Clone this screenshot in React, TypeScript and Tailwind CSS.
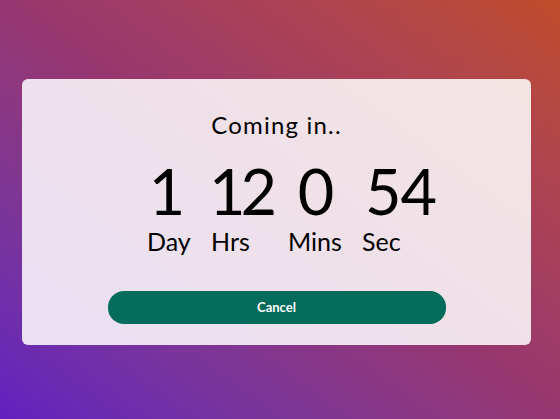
import React from "react";

const units = [
  { value: "1", label: "Day", numCls: "ml-0", labelW: "w-[64px]" },
  { value: "12", label: "Hrs", numCls: "ml-[12px] tracking-[-5px]", labelW: "w-[77px]" },
  { value: "0", label: "Mins", numCls: "ml-[17px]", labelW: "w-[74px]" },
  { value: "54", label: "Sec", numCls: "ml-[19px] tracking-[-1px]", labelW: "w-[60px]" },
];

const App = () => {
  return (
    <div
      className="w-[560px] h-[419px] bg-linear-to-tr from-[#621fc0] via-[#973670] to-[#c04c28] pt-[79px] px-[22px]"
      style={{ fontFamily: "Lato, 'Noto Sans', sans-serif" }}
    >
      {/* Card */}
      <div className="w-[509px] h-[266px] rounded-[6px] bg-white/85 flex flex-col items-center pt-[31px]">
        <h1 className="text-[24px] leading-[30px] text-black tracking-[1.2px]">Coming in..</h1>

        {/* Countdown */}
        <div className="w-full mt-[19px]">
          <div className="flex pl-[115px]">
            {units.map((u) => (
              <span
                key={u.label}
                className={`w-[60px] text-center text-[63px] leading-[64px] text-black ${u.numCls}`}
              >
                {u.value}
              </span>
            ))}
          </div>
          <div className="flex pl-[125px] mt-[4px]">
            {units.map((u) => (
              <span key={u.label} className={`text-[25px] leading-[28px] text-black ${u.labelW}`}>
                {u.label}
              </span>
            ))}
          </div>
        </div>

        <button className="mt-[36px] w-[338px] h-[33px] rounded-[16px] bg-[#056b5a] text-white text-[13px] font-bold">
          Cancel
        </button>
      </div>
    </div>
  );
};

export default App;
